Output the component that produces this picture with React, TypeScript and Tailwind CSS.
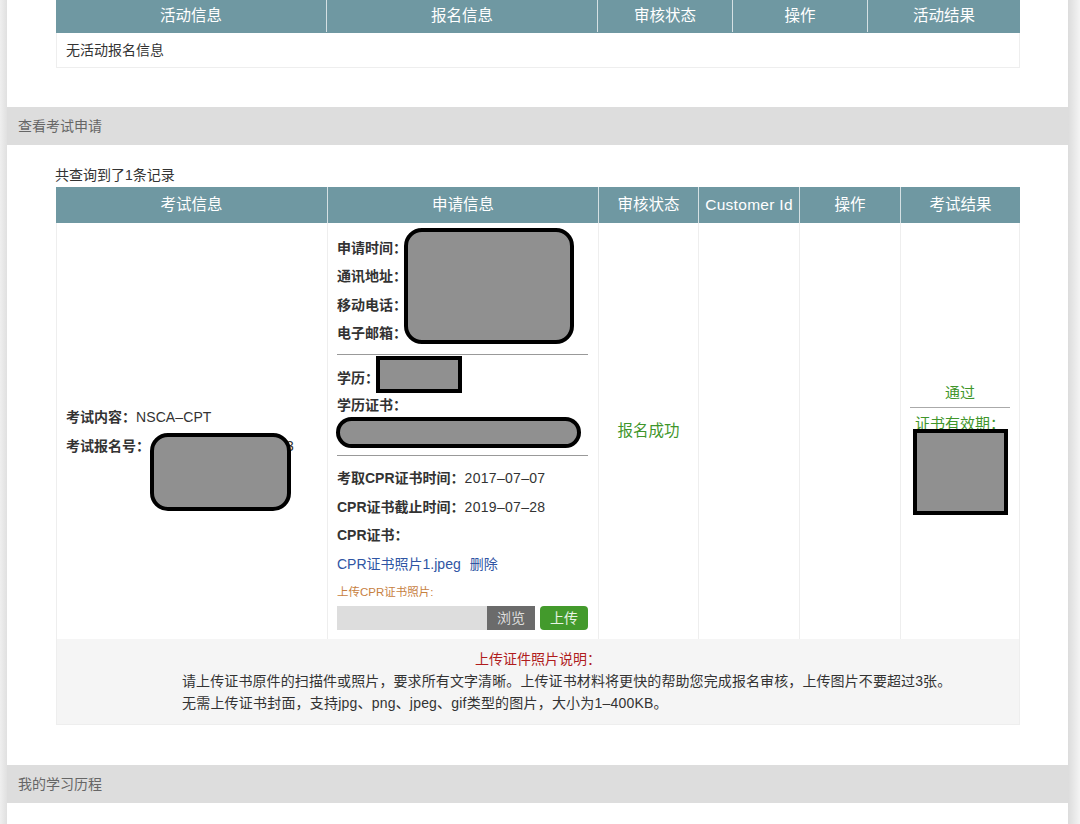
const font = { fontFamily: '"Liberation Sans", "Noto Sans CJK SC", sans-serif' };

function SectionTitle({ title }: { title: string }) {
  return (
    <div className="flex h-[38px] items-center bg-[#dddddd] pl-[11px] text-[14px] text-[#666666]">
      {title}
    </div>
  );
}

function HeadCell({ children, last }: { children: React.ReactNode; last?: boolean }) {
  return (
    <div
      className={`flex items-center justify-center text-[15.5px] text-white ${last ? "" : "border-r border-[#d5e0e3]"}`}
    >
      {children}
    </div>
  );
}

function Redact({ className }: { className: string }) {
  return <div className={`absolute z-10 border-[4px] border-black bg-[#909090] ${className}`} />;
}

function Label({ children }: { children: React.ReactNode }) {
  return <span className="font-bold text-[#333333]">{children}</span>;
}

function Line({ children }: { children?: React.ReactNode }) {
  return <div className="relative h-[28.5px] whitespace-nowrap leading-[28.5px]">{children}</div>;
}

export default function App() {
  return (
    <div style={font} className="flex h-[824px] w-[1080px] overflow-hidden bg-white text-[14px] text-[#333333]">
      <div className="w-[7px] shrink-0 bg-gradient-to-r from-[#efefef] to-[#e0e0e0]" />

      <main className="w-[1061px] shrink-0 bg-white">
        {/* activity table */}
        <div className="ml-[49px] w-[964px]">
          <div className="grid h-[33px] grid-cols-[271px_271px_135px_135px_152px] bg-[#6f98a2] pb-[1px]">
            <HeadCell>活动信息</HeadCell>
            <HeadCell>报名信息</HeadCell>
            <HeadCell>审核状态</HeadCell>
            <HeadCell>操作</HeadCell>
            <HeadCell last>活动结果</HeadCell>
          </div>
          <div className="flex h-[35px] items-center border border-t-0 border-[#eeeeee] pl-[9px]">
            无活动报名信息
          </div>
        </div>

        <div className="mt-[39px]">
          <SectionTitle title="查看考试申请" />
        </div>

        <div className="ml-[49px] w-[964px]">
          <div className="-ml-px flex h-[42px] items-end pb-[2px] leading-[20px]">共查询到了1条记录</div>

          <div className="grid h-[36px] grid-cols-[272px_271px_100px_101px_101px_119px] bg-[#6f98a2]">
            <HeadCell>考试信息</HeadCell>
            <HeadCell>申请信息</HeadCell>
            <HeadCell>审核状态</HeadCell>
            <HeadCell>
              <span className="tracking-[0.3px]">Customer Id</span>
            </HeadCell>
            <HeadCell>操作</HeadCell>
            <HeadCell last>考试结果</HeadCell>
          </div>

          <div className="grid h-[416px] grid-cols-[271px_271px_100px_101px_101px_118px] border-x border-[#eeeeee]">
            {/* exam info */}
            <div className="flex flex-col justify-center border-r border-[#eeeeee] pl-[9px] pt-[1px]">
              <Line>
                <Label>考试内容：</Label>
                <span className="tracking-[0.1px]">NSCA–CPT</span>
              </Line>
              <Line>
                <Label>考试报名号：</Label>
                <span className="absolute left-[220px] top-0">3</span>
                <Redact className="left-[84px] top-[1px] h-[78px] w-[141px] rounded-[18px]" />
              </Line>
            </div>

            {/* application info */}
            <div className="border-r border-[#eeeeee] pl-[9px] pr-[10px] pt-[10.5px]">
              <div className="relative">
                <Line>
                  <Label>申请时间：</Label>
                </Line>
                <Line>
                  <Label>通讯地址：</Label>
                </Line>
                <Line>
                  <Label>移动电话：</Label>
                </Line>
                <Line>
                  <Label>电子邮箱：</Label>
                </Line>
                <Redact className="left-[67px] top-[-5.5px] h-[116px] w-[170px] rounded-[18px]" />
              </div>
              <div className="mb-[9px] mt-[6.5px] border-t border-[#999999]" />
              <Line>
                <Label>学历：</Label>
                <Redact className="left-[39px] top-[-8px] h-[37px] w-[86px]" />
              </Line>
              <div className="-mt-[2px]">
                <Line>
                  <Label>学历证书：</Label>
                </Line>
              </div>
              <div className="relative h-[26px]">
                <Redact className="left-[-1px] top-[-2px] h-[31px] w-[245px] rounded-full" />
              </div>
              <div className="mb-[8px] mt-[10px] border-t border-[#999999]" />
              <Line>
                <Label>考取CPR证书时间：</Label>
                <span className="tracking-[0.3px]">2017–07–07</span>
              </Line>
              <Line>
                <Label>CPR证书截止时间：</Label>
                <span className="tracking-[0.3px]">2019–07–28</span>
              </Line>
              <Line>
                <Label>CPR证书：</Label>
              </Line>
              <Line>
                <span className="text-[#2f55a4]">CPR证书照片1.jpeg</span>
                <span className="ml-[9px] text-[#2f55a4]">删除</span>
              </Line>
              <div className="mt-[4px] h-[20px] text-[11.5px] leading-[20px] text-[#c7813f]">上传CPR证书照片:</div>
              <div className="mt-[4px] flex h-[24px] items-stretch">
                <div className="w-[150px] bg-[#dddddd]" />
                <div className="flex w-[48px] items-center justify-center bg-[#6b6b6b] text-[#dddddd]">浏览</div>
                <div className="ml-[5px] flex w-[48px] items-center justify-center rounded-[4px] bg-[#439a2c] text-[#e8f3e4]">
                  上传
                </div>
              </div>
            </div>

            {/* status */}
            <div className="flex items-center justify-center border-r border-[#eeeeee] text-[15.5px] text-[#3f962b]">
              报名成功
            </div>
            <div className="border-r border-[#eeeeee]" />
            <div className="border-r border-[#eeeeee]" />

            {/* result */}
            <div className="px-[9px] pt-[159px] text-center text-[15px] text-[#3f962b]">
              <div className="h-[22px] leading-[22px]">通过</div>
              <div className="mt-[3px] border-t border-[#aaaaaa]" />
              <div className="relative mt-[5px] h-[22px] whitespace-nowrap leading-[22px]">
                证书有效期：
                <Redact className="left-[3px] top-[16px] h-[86px] w-[95px]" />
              </div>
            </div>
          </div>

          {/* note */}
          <div className="h-[86px] border border-t-0 border-[#eeeeee] bg-[#f5f5f5] pt-[10px]">
            <div className="text-center text-[14px] leading-[21px] text-[#b01c1c]">上传证件照片说明：</div>
            <div className="pl-[125px] leading-[22px] tracking-[0.1px]">
              <div>请上传证书原件的扫描件或照片，要求所有文字清晰。上传证书材料将更快的帮助您完成报名审核，上传图片不要超过3张。</div>
              <div className="tracking-[0.2px]">无需上传证书封面，支持jpg、png、jpeg、gif类型的图片，大小为1–400KB。</div>
            </div>
          </div>
        </div>

        <div className="mt-[40px]">
          <SectionTitle title="我的学习历程" />
        </div>
      </main>

      <div className="w-[12px] shrink-0 bg-gradient-to-r from-[#dcdcdc] to-[#f4f4f4]" />
    </div>
  );
}
